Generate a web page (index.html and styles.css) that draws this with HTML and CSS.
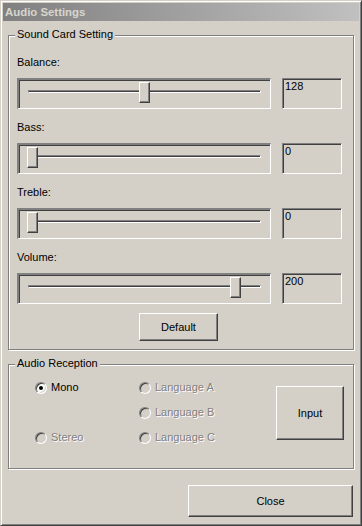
FILE: index.html
```html
<!DOCTYPE html>
<html>
<head>
    <title>Audio Settings</title>
    <link rel="stylesheet" href="styles.css">
</head>
<body>
    <div class="window">
        <div class="titlebar">Audio Settings</div>
        <div class="client">
            <div class="group sound">
                <span class="group-label">Sound Card Setting</span>

                <div class="field">
                    <div class="field-label">Balance:</div>
                    <div class="slider-row">
                        <div class="slider"><div class="track"></div><div class="thumb" style="left: 120px"></div></div>
                        <div class="value">128</div>
                    </div>
                </div>

                <div class="field">
                    <div class="field-label">Bass:</div>
                    <div class="slider-row">
                        <div class="slider"><div class="track"></div><div class="thumb" style="left: 8px"></div></div>
                        <div class="value">0</div>
                    </div>
                </div>

                <div class="field">
                    <div class="field-label">Treble:</div>
                    <div class="slider-row">
                        <div class="slider"><div class="track"></div><div class="thumb" style="left: 8px"></div></div>
                        <div class="value">0</div>
                    </div>
                </div>

                <div class="field">
                    <div class="field-label">Volume:</div>
                    <div class="slider-row last">
                        <div class="slider"><div class="track"></div><div class="thumb" style="left: 211px"></div></div>
                        <div class="value">200</div>
                    </div>
                </div>

                <button class="btn btn-default">Default</button>
            </div>

            <div class="group reception">
                <span class="group-label">Audio Reception</span>
                <div class="radios">
                    <div class="option"><span class="radio checked"></span>Mono</div>
                    <div class="option disabled"><span class="radio"></span>Language A</div>
                    <div></div>
                    <div class="option disabled"><span class="radio"></span>Language B</div>
                    <div class="option disabled"><span class="radio"></span>Stereo</div>
                    <div class="option disabled"><span class="radio"></span>Language C</div>
                </div>
                <button class="btn btn-input">Input</button>
            </div>

            <div class="footer">
                <button class="btn btn-close">Close</button>
            </div>
        </div>
    </div>
</body>
</html>
```

FILE: styles.css
```css
body {
    margin: 0;
    font-family: "Liberation Sans", Arial, sans-serif;
    font-size: 11px;
    background-color: #d4d0c8;
}

.window {
    width: 362px;
    height: 526px;
    box-sizing: border-box;
    padding: 2px;
    background-color: #d4d0c8;
    border: 1px solid;
    border-color: #d4d0c8 #404040 #404040 #d4d0c8;
    box-shadow: inset 1px 1px #ffffff, inset -1px -1px #808080;
}

.titlebar {
    height: 18px;
    line-height: 18px;
    padding-left: 2px;
    background: linear-gradient(to right, #808080, #c0c0c0);
    color: #d8d5ce;
    font-size: 11.4px;
    font-weight: bold;
}

.client {
    padding: 14px 5px 0 5px;
}

.group {
    position: relative;
    border: 1px solid #808080;
    box-shadow: inset 1px 1px #ffffff, 1px 1px #ffffff;
}

.group-label {
    position: absolute;
    top: -8px;
    left: 6px;
    padding: 0 2px;
    line-height: 13px;
    background-color: #d4d0c8;
}

.sound {
    padding: 20px 11px 8px 8px;
}

.field-label {
    line-height: 13px;
    margin-bottom: 9px;
}

.slider-row {
    display: flex;
    gap: 11px;
    margin-bottom: 12px;
}

.slider-row.last {
    margin-bottom: 9px;
}

.slider {
    position: relative;
    width: 254px;
    height: 31px;
    box-sizing: border-box;
    border-style: solid;
    border-width: 2px 1px 1px 2px;
    border-color: #808080 #ffffff #ffffff #808080;
    box-shadow: inset 1px 1px #404040;
}

.track {
    width: 231px;
    height: 1px;
    margin: 10px 0 0 9px;
    background-color: #404040;
    border: 1px solid;
    border-color: #808080 #ffffff #ffffff #808080;
}

.thumb {
    position: absolute;
    top: 2px;
    width: 11px;
    height: 21px;
    box-sizing: border-box;
    background-color: #d4d0c8;
    border: 1px solid;
    border-color: #ffffff #404040 #404040 #ffffff;
    box-shadow: inset -1px -1px #808080;
}

.value {
    width: 60px;
    height: 31px;
    box-sizing: border-box;
    padding: 1px 0 0 2px;
    line-height: 13px;
    border: 1px solid;
    border-color: #808080 #ffffff #ffffff #808080;
    box-shadow: inset 1px 1px #404040;
}

.btn {
    display: block;
    padding: 0;
    font: inherit;
    color: #000000;
    background-color: #d4d0c8;
    border: 1px solid;
    border-color: #ffffff #404040 #404040 #ffffff;
    box-shadow: inset -1px -1px #808080;
}

.btn-default {
    width: 79px;
    height: 28px;
    margin-left: 122px;
}

.reception {
    display: flex;
    align-items: flex-start;
    height: 105px;
    box-sizing: border-box;
    margin-top: 14px;
    padding: 16px 9px 0 26px;
}

.radios {
    display: grid;
    grid-template-columns: 104px auto;
    grid-template-rows: 13px 13px 13px;
    row-gap: 12px;
    align-content: start;
}

.option {
    display: flex;
    align-items: center;
    gap: 4px;
    line-height: 13px;
}

.option.disabled {
    color: #808080;
    text-shadow: 1px 1px #ffffff;
}

.radio {
    position: relative;
    width: 12px;
    height: 12px;
    box-sizing: border-box;
    border-radius: 50%;
    background-color: #ffffff;
    border: 1px solid;
    border-color: #808080 #ffffff #ffffff #808080;
    box-shadow: inset 1px 1px #404040, inset -1px -1px #d4d0c8;
}

.option.disabled .radio {
    background-color: #d4d0c8;
}

.radio.checked::after {
    content: "";
    position: absolute;
    left: 3px;
    top: 3px;
    width: 4px;
    height: 4px;
    border-radius: 50%;
    background-color: #000000;
}

.btn-input {
    width: 68px;
    height: 54px;
    margin: 5px 0 0 auto;
}

.footer {
    display: flex;
    justify-content: flex-end;
    margin-top: 16px;
    padding-right: 1px;
}

.btn-close {
    width: 165px;
    height: 32px;
}
```
